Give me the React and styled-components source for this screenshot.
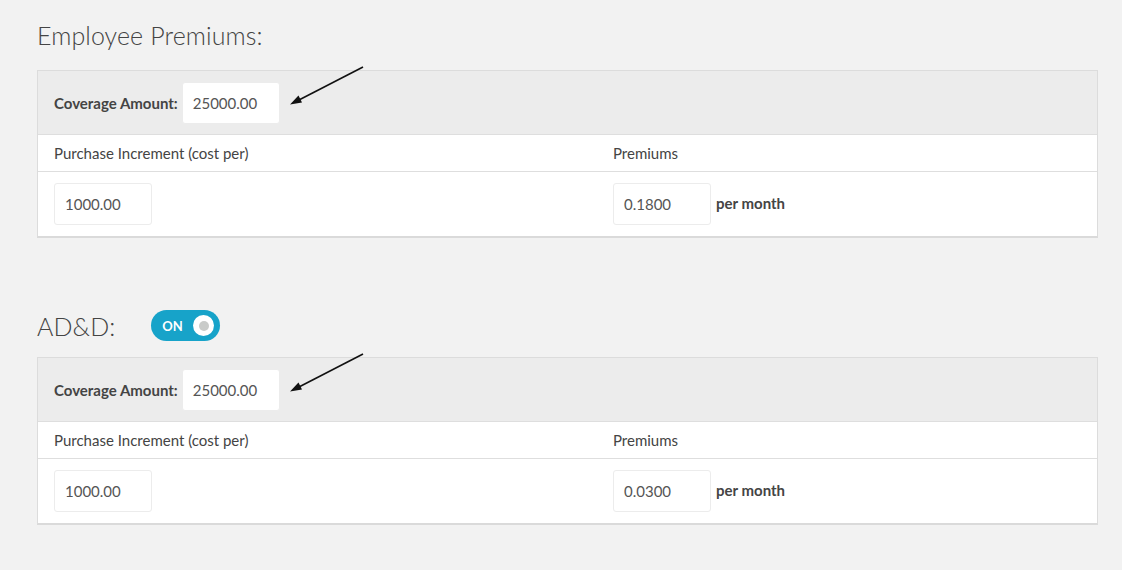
import React from "react";
import styled, { createGlobalStyle } from "styled-components";

const Global = createGlobalStyle`
  html, body { margin: 0; padding: 0; background: #f2f2f2; }
  body { font-family: Lato, "Open Sans", Arial, sans-serif; color: #444; }
  * { box-sizing: border-box; }
`;

const Page = styled.div`
  width: 1122px;
  height: 570px;
  padding: 20px 24px 0 37px;
  position: relative;
  overflow: hidden;
`;

const Section = styled.section`
  margin-top: ${(p) => p.$top || 0}px;
`;

const TitleRow = styled.div`
  display: flex;
  align-items: center;
  gap: 36px;
  height: ${(p) => p.$h || 30}px;
`;

const Title = styled.h2`
  margin: 0;
  font-family: "Lato Light", Lato, sans-serif;
  font-weight: 300;
  font-size: 25px;
  line-height: 30px;
  color: #444;
  letter-spacing: 0.1px;
`;

const Toggle = styled.div`
  width: 69px;
  height: 31px;
  border-radius: 16px;
  background: #17a3c9;
  display: flex;
  align-items: center;
  justify-content: space-between;
  padding: 0 6px 0 11px;
  color: #fff;
  font-weight: 700;
  font-size: 13px;
`;

const Knob = styled.span`
  width: 21px;
  height: 21px;
  border-radius: 50%;
  background: #fff;
  display: flex;
  align-items: center;
  justify-content: center;
  &::after {
    content: "";
    width: 10px;
    height: 10px;
    border-radius: 50%;
    background: #c9cbc9;
  }
`;

const Panel = styled.div`
  margin-top: ${(p) => p.$top}px;
  width: 1061px;
  border: 1px solid #dcdcdc;
  border-bottom: 2px solid #dadada;
  background: #fff;
  position: relative;
`;

const PanelHead = styled.div`
  background: #ececec;
  height: 64px;
  display: flex;
  align-items: center;
  padding: 0 16px;
  border-bottom: 1px solid #dedede;
`;

const Label = styled.span`
  font-weight: 700;
  font-size: 15px;
  color: #444;
  margin-right: 4px;
`;

const Input = styled.div`
  width: 98px;
  height: 42px;
  background: #fff;
  border: 1px solid #ececec;
  border-radius: 3px;
  display: flex;
  align-items: center;
  padding-left: 10px;
  font-size: 15px;
  color: #555;
`;

const Grid = styled.div`
  display: grid;
  grid-template-columns: 559px 1fr;
  align-items: center;
  height: ${(p) => p.$h}px;
  border-bottom: ${(p) => (p.$line ? "1px solid #dedede" : "none")};
  padding-left: 16px;
`;

const ColText = styled.span`
  font-size: 15px;
  color: #444;
`;

const Cell = styled.div`
  display: flex;
  align-items: center;
  gap: 5px;
`;

const Unit = styled.span`
  font-size: 15px;
  font-weight: 700;
  color: #444;
  margin-top: -3px;
`;

const Arrow = styled.svg`
  position: absolute;
  left: ${(p) => p.$x}px;
  top: ${(p) => p.$y}px;
  overflow: visible;
`;

function ArrowIcon({ x, y }) {
  return (
    <Arrow $x={x} $y={y} width="76" height="42" viewBox="0 0 76 42">
      <line x1="74" y1="1" x2="8" y2="35" stroke="#111" strokeWidth="1.6" />
      <polygon points="1,38.5 9.5,29.5 13,36.5" fill="#111" />
    </Arrow>
  );
}

function PremiumPanel({ top, coverage, increment, premium }) {
  return (
    <Panel $top={top}>
      <PanelHead>
        <Label>Coverage Amount:</Label>
        <Input>{coverage}</Input>
      </PanelHead>
      <Grid $h={37} $line>
        <ColText>Purchase Increment (cost per)</ColText>
        <ColText>Premiums</ColText>
      </Grid>
      <Grid $h={64}>
        <Cell>
          <Input>{increment}</Input>
        </Cell>
        <Cell>
          <Input>{premium}</Input>
          <Unit>per month</Unit>
        </Cell>
      </Grid>
      <ArrowIcon x={251} y={-5} />
    </Panel>
  );
}

export default function App() {
  return (
    <>
      <Global />
      <Page>
        <Section>
          <TitleRow>
            <Title>Employee Premiums:</Title>
          </TitleRow>
          <PremiumPanel top={20} coverage="25000.00" increment="1000.00" premium="0.1800" />
        </Section>
        <Section $top={72}>
          <TitleRow $h={31}>
            <Title>AD&amp;D:</Title>
            <Toggle>
              ON
              <Knob />
            </Toggle>
          </TitleRow>
          <PremiumPanel top={16} coverage="25000.00" increment="1000.00" premium="0.0300" />
        </Section>
      </Page>
    </>
  );
}
